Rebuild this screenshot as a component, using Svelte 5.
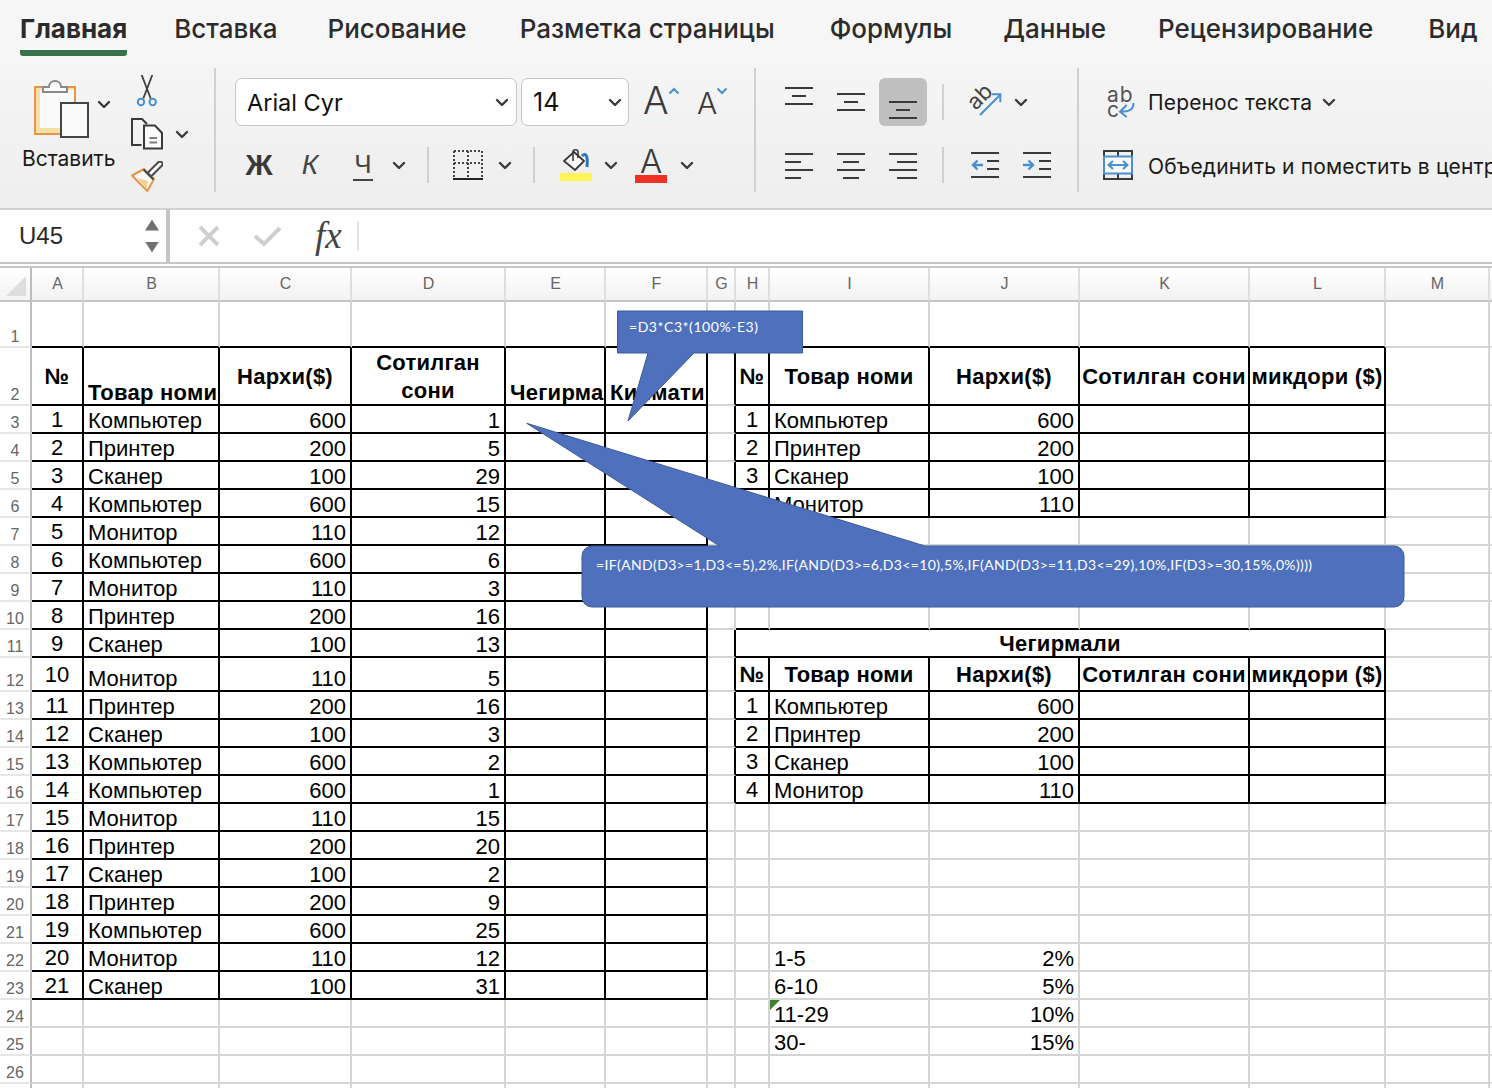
<script>
  const tabs = ['Главная','Вставка','Рисование','Разметка страницы','Формулы','Данные','Рецензирование','Вид'];
  const colNames = ['A','B','C','D','E','F','G','H','I','J','K','L','M'];
  const left = [
    ['Компьютер',600,1],['Принтер',200,5],['Сканер',100,29],['Компьютер',600,15],['Монитор',110,12],
    ['Компьютер',600,6],['Монитор',110,3],['Принтер',200,16],['Сканер',100,13],['Монитор',110,5],
    ['Принтер',200,16],['Сканер',100,3],['Компьютер',600,2],['Компьютер',600,1],['Монитор',110,15],
    ['Принтер',200,20],['Сканер',100,2],['Принтер',200,9],['Компьютер',600,25],['Монитор',110,12],['Сканер',100,31]
  ];
  const goods = [['Компьютер',600],['Принтер',200],['Сканер',100],['Монитор',110]];
  const tiers = [['1-5','2%'],['6-10','5%'],['11-29','10%'],['30-','15%']];
  const data = {};
  const put = (r, c, t, cls = '') => { data[r + '-' + c] = { t, cls }; };

  put(2,0,'№','b cn m'); put(2,1,'Товар номи','b'); put(2,2,'Нархи($)','b cn m');
  put(2,3,'Сотилган\nсони','b cn m wrap'); put(2,4,'Чегирма','b'); put(2,5,'Киймати','b');
  left.forEach((row, i) => {
    const r = i + 3;
    put(r,0,String(i + 1),'cn m'); put(r,1,row[0]); put(r,2,String(row[1]),'rt'); put(r,3,String(row[2]),'rt');
  });
  const header = (r) => {
    put(r,7,'№','b cn m'); put(r,8,'Товар номи','b cn m'); put(r,9,'Нархи($)','b cn m');
    put(r,10,'Сотилган сони','b cn m'); put(r,11,'микдори ($)','b cn m');
  };
  const block = (r) => goods.forEach((g, i) => {
    put(r + i,7,String(i + 1),'cn m'); put(r + i,8,g[0]); put(r + i,9,String(g[1]),'rt');
  });
  header(2); block(3);
  put(11,7,'Чегирмали','b cn m merged');
  header(12); block(13);
  tiers.forEach((t, i) => {
    put(22 + i,8,t[0], i === 2 ? 'flag' : ''); put(22 + i,9,t[1],'rt');
  });

  const inTable = (r, c) =>
    (r >= 2 && r <= 23 && c >= 0 && c <= 5) ||
    (r >= 2 && r <= 6 && c >= 7 && c <= 11) ||
    (r >= 11 && r <= 16 && c >= 7 && c <= 11);

  const rowsList = Array.from({ length: 27 }, (_, i) => i + 1);
  const cells = [];
  for (const r of rowsList) {
    cells.push({ kind: 'rowhead', t: r < 27 ? String(r) : '', key: 'h' + r });
    for (let c = 0; c < 14; c++) {
      if (r === 11 && c > 7 && c < 12) continue;
      const d = data[r + '-' + c] || { t: '', cls: '' };
      const rc = r === 11 && c === 7 ? 11 : c;
      const bb = inTable(r, c) || inTable(r + 1, c);
      const br = inTable(r, rc) || inTable(r, rc + 1);
      cells.push({
        kind: 'cell', key: r + '-' + c, t: d.t,
        cls: [d.cls, bb ? 'bb' : '', br ? 'br' : ''].join(' ')
      });
    }
  }
</script>

{#snippet chev()}
  <svg class="chev" width="14" height="9" viewBox="0 0 14 9"><path d="M2 2 L7 7 L12 2" fill="none" stroke="#3a3a3a" stroke-width="2.4" stroke-linecap="round" stroke-linejoin="round"/></svg>
{/snippet}

{#snippet lines(y, spans, h)}
  <svg width="28" height={h} viewBox={'0 0 28 ' + h}>
    {#each spans as s, i}
      <rect x={s[0]} y={y + i * 8} width={s[1]} height="2" fill="#3a3a3a"/>
    {/each}
  </svg>
{/snippet}

<div class="page">
  <nav class="tabs">
    {#each tabs as t, i}
      <div class="tab" class:active={i === 0}>{t}</div>
    {/each}
  </nav>

  <section class="ribbon">
    <div class="g g1">
      <div class="paste">
        <div class="paste-top">
          <svg width="56" height="62" viewBox="0 0 56 62">
            <rect x="1" y="11" width="40" height="47" fill="#f7e0a6" stroke="#e4974a" stroke-width="2"/>
            <rect x="6" y="14" width="34" height="38" fill="#fafafa"/>
            <path d="M9 16 V11 H15 C15 3 27 3 27 11 H33 V16 Z" fill="#fafafa" stroke="#8a8a8a" stroke-width="2"/>
            <rect x="27" y="27" width="27" height="34" fill="#fafafa" stroke="#444" stroke-width="2"/>
          </svg>
          {@render chev()}
        </div>
        <div class="paste-label">Вставить</div>
      </div>
      <div class="tools">
        <svg width="32" height="32" viewBox="0 0 32 32">
          <path d="M10.700 0 L19.700 23.500 M21.300 0 L12.300 23.500" fill="none" stroke="#3f3f3f" stroke-width="1.800"/>
          <circle cx="10" cy="27" r="3.200" fill="none" stroke="#4a90d0" stroke-width="2"/>
          <circle cx="21.700" cy="27" r="3.200" fill="none" stroke="#4a90d0" stroke-width="2"/>
        </svg>
        <div class="copy">
          <svg width="32" height="32" viewBox="0 0 32 32">
            <path d="M10.500 27 H1 V1 H11 L16 6" fill="none" stroke="#3a3a3a" stroke-width="2"/>
            <path d="M13 7.500 H24 L31 15 V30.500 H13 Z" fill="#fafafa" stroke="#3a3a3a" stroke-width="2"/>
            <path d="M18.500 20 H26 M18.500 24.500 H26" stroke="#7d7d7d" stroke-width="2"/>
          </svg>
          {@render chev()}
        </div>
        <svg width="32" height="31" viewBox="0 0 32 31">
          <path d="M1 14.500 L13 8 L23 18 L16.300 30 Z" fill="#fafafa" stroke="#e4974a" stroke-width="2" stroke-linejoin="round"/>
          <path d="M6 17 L17 20 L15.500 27 Z" fill="#f6cf8e"/>
          <path d="M12.500 8.500 L22.500 18.500" stroke="#4a4a4a" stroke-width="2.200"/>
          <path d="M20 12 L29 3" stroke="#4a4a4a" stroke-width="7" stroke-linecap="round"/>
          <path d="M20 12 L29 3" stroke="#fafafa" stroke-width="3" stroke-linecap="round"/>
        </svg>
      </div>
    </div>
    <div class="sep"></div>

    <div class="g g2">
      <div class="font-row">
        <div class="select font">Arial Cyr {@render chev()}</div>
        <div class="select size">14 {@render chev()}</div>
        <div class="grow"><span class="big-a">A</span><svg class="caret" width="12" height="8" viewBox="0 0 12 8"><path d="M1.500 6.500 L6 2 L10.500 6.500" fill="none" stroke="#4a90d0" stroke-width="2.200"/></svg></div>
        <div class="shrink"><span class="small-a">A</span><svg class="caret" width="12" height="8" viewBox="0 0 12 8"><path d="M1.500 1.500 L6 6 L10.500 1.500" fill="none" stroke="#4a90d0" stroke-width="2.200"/></svg></div>
      </div>
      <div class="fmt-row">
        <span class="bold-btn">Ж</span>
        <span class="ital-btn">К</span>
        <span class="und-btn">Ч</span>
        {@render chev()}
        <div class="vsep"></div>
        <svg width="30" height="30" viewBox="0 0 30 30">
          <path d="M1 1 H29 V27 M1 1 V27 M1 13 H29 M15 1 V27" fill="none" stroke="#444" stroke-width="2" stroke-dasharray="2 2"/>
          <rect x="0" y="28" width="30" height="2" fill="#222"/>
        </svg>
        {@render chev()}
        <div class="vsep"></div>
        <svg width="34" height="34" viewBox="0 0 34 34">
          <path d="M5 13 L15 4 L25 13 L16 22 Z" fill="#fafafa" stroke="#3a3a3a" stroke-width="1.800" stroke-linejoin="round"/>
          <path d="M14 13 V4 C14 1 19 1 19 4 V10" fill="none" stroke="#3a3a3a" stroke-width="1.600"/>
          <path d="M23 8 C27 4 29 8 28 19" fill="none" stroke="#2a74c0" stroke-width="3"/>
          <rect x="1" y="25" width="32" height="8" fill="#fdf458"/>
        </svg>
        {@render chev()}
        <div class="color-a"><span>A</span><i></i></div>
        {@render chev()}
      </div>
    </div>
    <div class="sep"></div>

    <div class="g g3">
      <div class="al-row">
        {@render lines(9, [[0,28],[7,14],[0,28]], 48)}
        {@render lines(15, [[0,28],[7,14],[0,28]], 48)}
        <div class="active-btn">{@render lines(23, [[0,28],[7,14],[0,28]], 48)}</div>
        <div class="vsep short"></div>
        <svg class="orient-ico" width="38" height="36" viewBox="0 0 38 36">
          <text class="orient" x="13.700" y="20" text-anchor="middle" transform="rotate(-45 13.700 12.700)">ab</text>
          <path d="M14 31 L34 11 M26 10.300 H34.300 V18.300" fill="none" stroke="#4a90d0" stroke-width="2"/>
        </svg>
        {@render chev()}
      </div>
      <div class="al-row second">
        {@render lines(8, [[0,28],[0,16],[0,28],[0,16]], 40)}
        {@render lines(8, [[0,28],[6,16],[0,28],[6,16]], 40)}
        {@render lines(8, [[0,28],[8,20],[0,28],[8,20]], 40)}
        <div class="vsep"></div>
        <svg width="28" height="26" viewBox="0 0 28 26">
          <path d="M0 1 H28 M16 9 H28 M16 17 H28 M0 25 H28" stroke="#3a3a3a" stroke-width="2"/>
          <path d="M12 13 H2 M6.500 8.500 L2 13 L6.500 17.500" fill="none" stroke="#4a90d0" stroke-width="2.400"/>
        </svg>
        <svg width="28" height="26" viewBox="0 0 28 26">
          <path d="M0 1 H28 M16 9 H28 M16 17 H28 M0 25 H28" stroke="#3a3a3a" stroke-width="2"/>
          <path d="M0 13 H10 M5.500 8.500 L10 13 L5.500 17.500" fill="none" stroke="#4a90d0" stroke-width="2.400"/>
        </svg>
      </div>
    </div>
    <div class="sep"></div>

    <div class="g g4">
      <div class="wrap-row">
        <svg class="wrap-ico" width="30" height="32" viewBox="0 0 30 32">
          <text class="wrap-txt" x="0" y="16">ab</text>
          <text class="wrap-txt" x="0" y="31">c</text>
          <path d="M26.500 17 C26.500 24 22 25.700 14 25.700 M19.700 19 L13 25.700 L19.700 31" fill="none" stroke="#4a90d0" stroke-width="2"/>
        </svg>
        <span class="rb-text">Перенос текста</span>
        {@render chev()}
      </div>
      <div class="merge-row">
        <svg class="merge-ico" width="30" height="30" viewBox="0 0 30 30">
          <path d="M1 1 H29 V29 H1 Z M15 1 V7 M15 23 V29" fill="none" stroke="#3a3a3a" stroke-width="2"/>
          <rect x="1" y="6.500" width="28" height="17" fill="#fafafa" stroke="#4a90d0" stroke-width="2"/>
          <path d="M6 15 H24 M10 11 L5.500 15 L10 19 M20 11 L24.500 15 L20 19" fill="none" stroke="#4a90d0" stroke-width="2"/>
        </svg>
        <span class="rb-text low">Объединить и поместить в центр</span>
      </div>
    </div>
  </section>

  <section class="fbar">
    <div class="namebox">
      <span>U45</span>
      <div class="stepper"><i class="up"></i><i class="down"></i></div>
    </div>
    <div class="fbtns">
      <svg width="24" height="24" viewBox="0 0 24 24"><path d="M3 3 L21 21 M21 3 L3 21" stroke="#cfcfcf" stroke-width="4"/></svg>
      <svg width="30" height="24" viewBox="0 0 30 24"><path d="M2 12 L11 20 L27 4" fill="none" stroke="#cfcfcf" stroke-width="4"/></svg>
      <span class="fx">fx</span>
      <div class="fsep"></div>
    </div>
  </section>
  <div class="fbar-gap"></div>

  <section class="sheet">
    <div class="corner"><i></i></div>
    {#each colNames as c}
      <div class="colhead">{c}</div>
    {/each}
    <div class="colhead"></div>
    {#each cells as cell (cell.key)}
      {#if cell.kind === 'rowhead'}
        <div class="rowhead">{cell.t}</div>
      {:else}
        <div class={'cell ' + cell.cls}><span>{cell.t}</span></div>
      {/if}
    {/each}
  </section>

  <svg class="callouts" width="1492" height="1088" viewBox="0 0 1492 1088">
    <path d="M617.500 311 H802.500 V353 H694 L628 421 L648 353 H617.500 Z" fill="#4f71bd" stroke="#3c5a9a" stroke-width="1"/>
    <text class="ctext" x="629" y="332" textLength="129" lengthAdjust="spacing">=D3*C3*(100%-E3)</text>
    <path d="M592 546 H719.500 L526.700 423.300 L925 546 H1394 A10 10 0 0 1 1404 556 V597 A10 10 0 0 1 1394 607 H592 A10 10 0 0 1 582 597 V556 A10 10 0 0 1 592 546 Z" fill="#4f71bd" stroke="#3c5a9a" stroke-width="1"/>
    <text class="ctext" x="596" y="570" textLength="716" lengthAdjust="spacing">=IF(AND(D3&gt;=1,D3&lt;=5),2%,IF(AND(D3&gt;=6,D3&lt;=10),5%,IF(AND(D3&gt;=11,D3&lt;=29),10%,IF(D3&gt;=30,15%,0%))))</text>
  </svg>
</div>

<style>
  :global(body) { margin: 0; background: #fff; }
  .page {
    position: relative;
    width: 1492px;
    height: 1088px;
    overflow: hidden;
    font-family: Inter, "Liberation Sans", sans-serif;
    color: #222;
  }
  .tabs {
    height: 66px;
    box-sizing: border-box;
    display: flex;
    padding-left: 20px;
    background: #f6f6f6;
    white-space: nowrap;
  }
  .tab {
    height: 56px;
    box-sizing: border-box;
    padding-top: 13px;
    font-size: 26px;
    line-height: 32px;
    font-weight: 500;
    color: #2b2b2b;
    margin-right: 53px;
  }
  .tab:nth-child(1) { margin-right: 47px; }
  .tab:nth-child(2) { margin-right: 50px; }
  .tab:nth-child(4) { margin-right: 55px; }
  .tab:nth-child(5) { margin-right: 51px; }
  .tab:nth-child(6) { margin-right: 52px; }
  .tab:nth-child(7) { margin-right: 55px; }
  .tab.active {
    font-weight: 700;
    border-bottom: 6px solid #38724a;
    border-radius: 3px;
  }
  .ribbon {
    height: 144px;
    box-sizing: border-box;
    padding: 2px 0 16px;
    display: flex;
    background: linear-gradient(#f5f5f5, #eeeeee);
    border-bottom: 2px solid #d2d2d2;
    overflow: hidden;
    white-space: nowrap;
  }
  .sep { width: 2px; background: #d0d0d0; flex: none; }
  .g { flex: none; box-sizing: border-box; }
  .g1 { width: 214px; padding-left: 22px; display: flex; }
  .paste { width: 109px; }
  .paste-top { display: flex; align-items: flex-start; padding: 8px 0 0 12px; gap: 7px; }
  .paste-top .chev { margin-top: 24px; }
  .paste-label { font-size: 21px; line-height: 24px; margin-top: 9px; color: #1a1a1a; }
  .tools { padding-top: 7px; display: flex; flex-direction: column; gap: 11px; }
  .copy { display: flex; align-items: center; gap: 12px; height: 32px; }
  .g2 { width: 538px; padding-left: 19px; }
  .font-row { display: flex; margin-top: 10px; height: 48px; }
  .select {
    box-sizing: border-box;
    height: 48px;
    background: #fff;
    border: 1px solid #c6c6c6;
    border-radius: 7px;
    display: flex;
    align-items: center;
    justify-content: space-between;
    padding: 0 7px 0 11px;
    font-size: 25px;
    color: #111;
  }
  .font { width: 282px; margin-right: 4px; font-size: 23.5px; }
  .size { width: 108px; padding-right: 6px; }
  .grow { display: flex; margin-left: 14px; width: 40px; align-items: flex-start; }
  .shrink { display: flex; margin-left: 14px; align-items: flex-start; }
  .big-a { font-size: 38px; line-height: 44px; font-weight: 300; color: #3a3a3a; }
  .small-a { font-size: 30px; line-height: 50px; font-weight: 300; color: #3a3a3a; }
  .caret { margin-top: 9px; margin-left: -1px; }
  .fmt-row {
    display: grid;
    grid-template-columns: 48px 54px 52px 20px 38px 42px 32px 26px 58px 12px 68px 4px;
    justify-items: center;
    align-items: center;
    height: 40px;
    margin-top: 19px;
  }
  .bold-btn { font: 700 30px/40px "Liberation Sans", sans-serif; color: #3a3a3a; }
  .ital-btn { font: italic 400 28px/40px "Liberation Sans", sans-serif; color: #444; }
  .und-btn { font: 400 26px/30px "Liberation Sans", sans-serif; color: #444; border-bottom: 2px solid #444; padding: 0 1px; }
  .vsep { width: 2px; height: 36px; background: #d0d0d0; }
  .vsep.short { height: 36px; }
  .color-a { display: flex; flex-direction: column; align-items: center; width: 32px; }
  .color-a span { font-size: 33px; line-height: 27px; font-weight: 300; color: #3a3a3a; height: 27px; }
  .color-a i { display: block; width: 32px; height: 8px; background: #ee3124; }
  .g3 { width: 321px; padding-left: 17px; }
  .al-row {
    display: grid;
    grid-template-columns: 52px 52px 52px 28px 56px 16px;
    justify-items: center;
    align-items: center;
    height: 48px;
    margin-top: 10px;
  }
  .al-row.second { grid-template-columns: 52px 52px 52px 28px 56px 48px; height: 40px; margin-top: 19px; }
  .active-btn { width: 48px; height: 48px; border-radius: 6px; background: #c0c0c0; display: flex; justify-content: center; }
  .orient-ico, .wrap-ico { overflow: visible; }
  .orient { font-size: 22px; fill: #444; }
  .g4 { padding-left: 24px; flex: 1; }
  .wrap-row { display: flex; align-items: center; height: 48px; margin-top: 10px; }
  .wrap-ico { margin-left: 4px; margin-right: 11px; }
  .wrap-txt { font-size: 21px; fill: #555; letter-spacing: 1px; }
  .merge-row { display: flex; align-items: center; height: 40px; margin-top: 19px; }
  .merge-ico { margin-right: 15px; }
  .rb-text { font-size: 21px; color: #1a1a1a; letter-spacing: .15px; margin-right: 10px; }
  .rb-text.low { padding-top: 2px; }

  .fbar { height: 52px; display: flex; border-bottom: 2px solid #c6c6c6; background: #fff; box-sizing: content-box; }
  .namebox {
    width: 170px;
    box-sizing: border-box;
    padding: 0 7px 0 19px;
    display: flex;
    align-items: center;
    justify-content: space-between;
    border-right: 4px solid #c4c4c4;
    font: 400 24px "Liberation Sans", sans-serif;
    color: #2a2a2a;
  }
  .stepper { display: flex; flex-direction: column; gap: 11px; margin-right: 0; }
  .stepper i { display: block; width: 14px; height: 11px; background: #707070; }
  .stepper .up { clip-path: polygon(50% 0, 100% 100%, 0 100%); }
  .stepper .down { clip-path: polygon(0 0, 100% 0, 50% 100%); }
  .fbtns { display: flex; align-items: center; padding-left: 27px; }
  .fbtns svg:first-child { margin-right: 32px; }
  .fx { font: italic 400 37px/40px "Liberation Serif", serif; color: #444; margin-left: 32px; }
  .fsep { width: 2px; height: 30px; background: #e2e2e2; margin-left: 15px; }
  .fbar-gap { height: 2px; background: #fff; }

  .sheet {
    display: grid;
    grid-template-columns: 32px 52px 136px 132px 154px 100px 102px 28px 34px 160px 150px 170px 136px 104px 20px;
    grid-template-rows: 34px 46px 58px repeat(9, 28px) 34px repeat(14, 28px) 30px;
    border-top: 2px solid #c6c6c6;
    font-family: "Liberation Sans", Arial, sans-serif;
    font-size: 22px;
    color: #000;
    background: #fff;
  }
  .corner, .colhead, .rowhead { box-sizing: border-box; color: #666; font-size: 16px; }
  .corner {
    background: linear-gradient(#fff, #f3f3f3);
    border-right: 2px solid #bdbdbd;
    border-bottom: 2px solid #c4c4c4;
  }
  .corner i {
    display: block;
    width: 20px;
    height: 20px;
    margin: 8px 0 0 6px;
    background: #dedede;
    clip-path: polygon(100% 0, 100% 100%, 0 100%);
  }
  .colhead {
    display: flex;
    align-items: center;
    justify-content: center;
    padding-left: 1px;
    background: linear-gradient(#fff, #f2f2f2);
    border-right: 2px solid #dedede;
    border-bottom: 2px solid #c4c4c4;
  }
  .rowhead {
    display: flex;
    align-items: flex-end;
    justify-content: center;
    line-height: 18px;
    background: #fff;
    border-right: 2px solid #bdbdbd;
    border-bottom: 2px solid #e6e6e6;
  }
  .cell {
    position: relative;
    box-sizing: border-box;
    min-width: 0;
    display: flex;
    align-items: flex-end;
    padding: 0 4px;
    line-height: 22px;
    white-space: nowrap;
    overflow: hidden;
    border-right: 2px solid #d4d4d4;
    border-bottom: 2px solid #d4d4d4;
  }
  .cell.bb { border-bottom-color: #000; }
  .cell.br { border-right-color: #000; }
  .cell.b { font-weight: 700; letter-spacing: .25px; }
  .cell.rt { justify-content: flex-end; }
  .cell.cn { justify-content: center; text-align: center; padding: 0; }
  .cell.m { align-items: center; padding-top: 2px; }
  .cell.wrap { white-space: pre-line; line-height: 28px; }
  .cell.merged { grid-column: span 5; }
  .cell.flag::before {
    content: "";
    position: absolute;
    left: 0;
    top: 0;
    width: 10px;
    height: 10px;
    background: #3f7f2f;
    clip-path: polygon(0 0, 100% 0, 0 100%);
  }
  .callouts { position: absolute; left: 0; top: 0; pointer-events: none; }
  .ctext { font: 400 14px Lato, "Open Sans", sans-serif; fill: #fff; }
</style>
